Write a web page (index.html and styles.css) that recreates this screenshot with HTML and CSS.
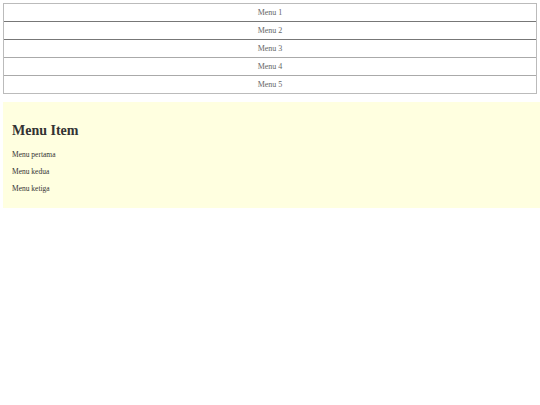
FILE: index.html
```html
<!DOCTYPE html>
<html lang="en">
<head>
    <meta charset="UTF-8">
    <meta name="viewport" content="width=device-width, initial-scale=1.0">
    <title>Menu</title>
    <link rel="stylesheet" href="styles.css">
</head>
<body>
    <ul class="menu">
        <li>Menu 1</li>
        <li>Menu 2</li>
        <li>Menu 3</li>
        <li>Menu 4</li>
        <li>Menu 5</li>
    </ul>

    <div class="content">
        <h1>Menu Item</h1>
        <p>Menu pertama</p>
        <p>Menu kedua</p>
        <p>Menu ketiga</p>
    </div>
</body>
</html>
```

FILE: styles.css
```css
body {
    font-family: "Liberation Serif", serif;
    margin: 3px 0 3px 3px;
    padding: 0;
    background-color: #fff;
}
.menu {
    list-style: none;
    margin: 0 3px 0 0;
    padding: 0;
    border: 1px solid #bbb;
}
.menu li {
    height: 17px;
    line-height: 17px;
    text-align: center;
    font-size: 8px;
    color: #666;
    border-top: 1px solid #777;
}
.menu li:first-child {
    border-top: none;
}
.menu li:nth-child(4),
.menu li:nth-child(5) {
    border-top-color: #aaa;
}
.content {
    margin-top: 8px;
    padding: 21px 9px 15px;
    height: 70px;
    background-color: #ffffe0;
}
h1 {
    font-size: 14px;
    line-height: 16px;
    color: #333;
    margin: 0 0 11px;
}
p {
    font-size: 7.5px;
    line-height: 9px;
    color: #333;
    margin: 0 0 8px;
}
```
